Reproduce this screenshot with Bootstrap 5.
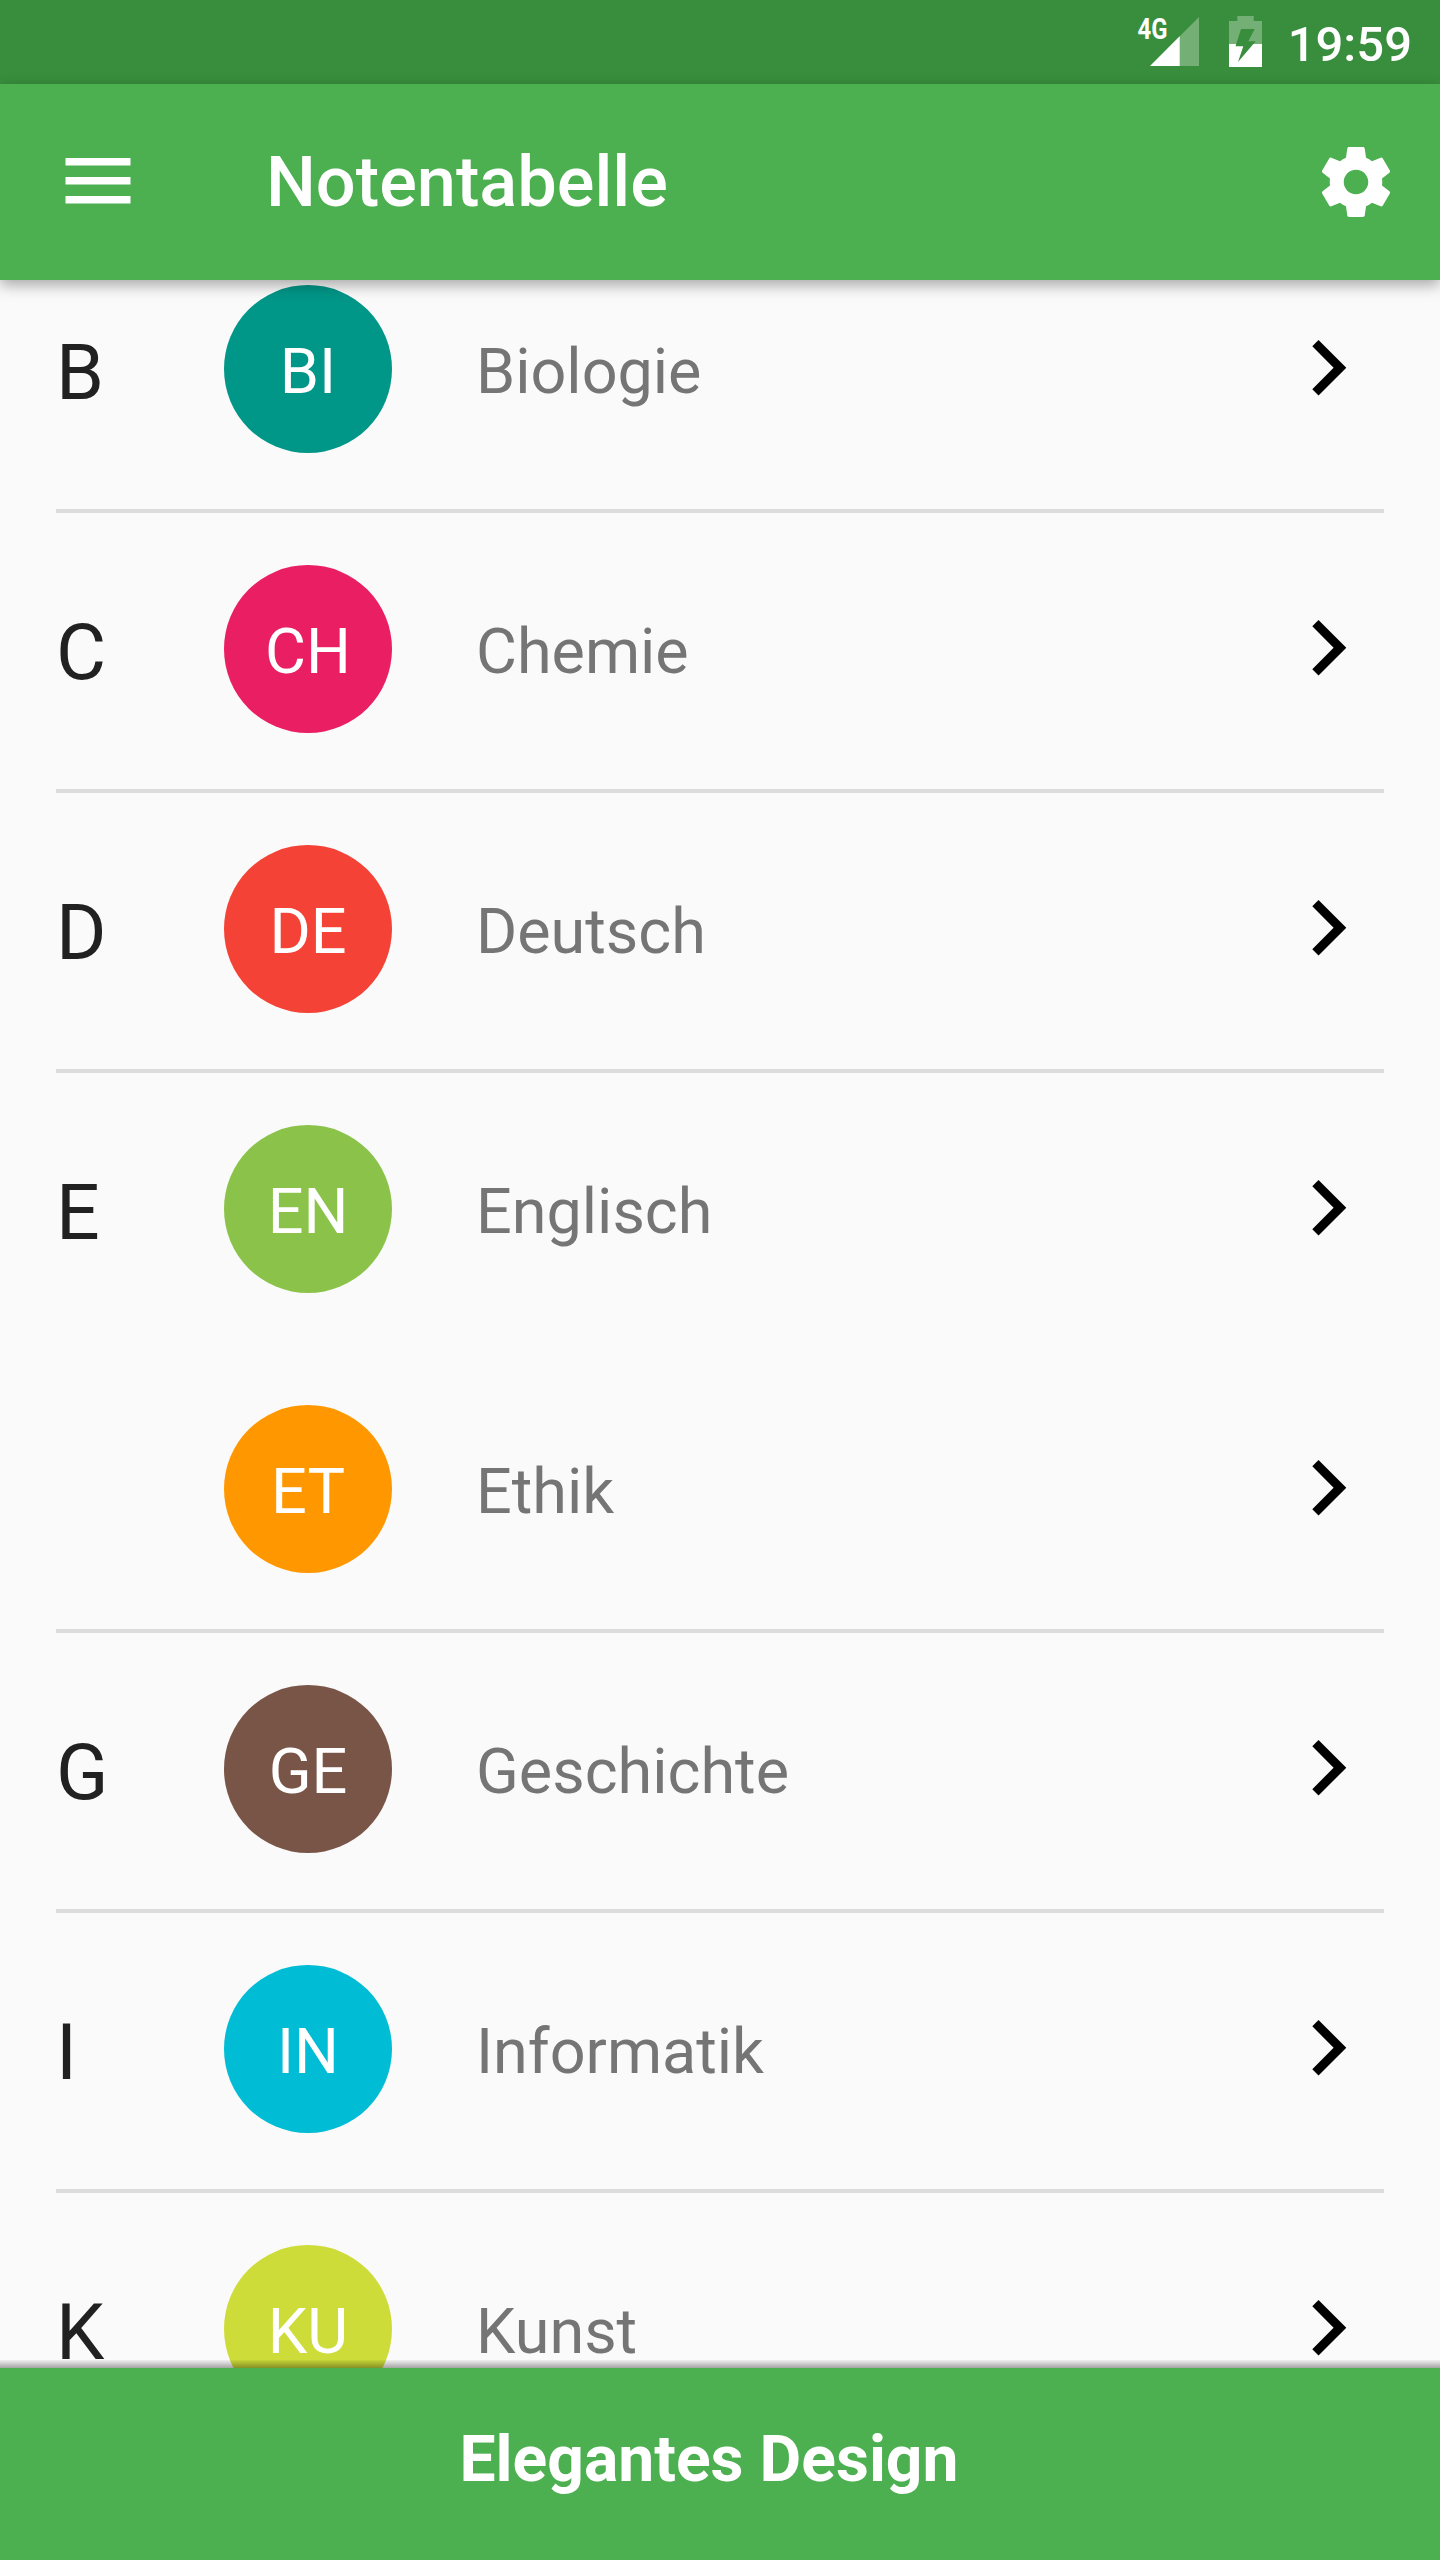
<!DOCTYPE html>
<html lang="de">
<head>
<meta charset="utf-8">
<meta name="viewport" content="width=device-width, initial-scale=1">
<title>Notentabelle</title>
<link href="https://cdn.jsdelivr.net/npm/bootstrap@5.3.0/dist/css/bootstrap.min.css" rel="stylesheet">
<style>
  body { font-family: Roboto, "Liberation Sans", sans-serif; background: #fafafa; line-height: 1; }
  svg { display: block; flex: none; }
  .screen { height: 2560px; width: 1440px; }
  .statusbar { height: 84px; background: #388e3c; padding-right: 28px; }
  .clock { font-size: 49px; font-weight: 500; padding-top: 5px; margin-left: 24px; }
  .appbar { height: 196px; background: #4caf50; padding: 0 42px 0 56px; box-shadow: 0 5px 14px rgba(0,0,0,.34); z-index: 2; }
  .app-title { font-size: 70.3px; font-weight: 500; margin-left: 126px; }
  .subjects { min-height: 0; }
  .subject-list { margin-top: -51px; }
  .subject { height: 280px; padding: 0 93px 0 56px; }
  .rule { height: 4px; margin: 0 56px -4px; background: #dcdcdc; }
  .initial { width: 168px; font-size: 77px; line-height: 65px; color: #212121; padding-top: 9px; }
  .disc { width: 168px; height: 168px; font-size: 63px; padding-top: 5px; }
  .subject-name { font-size: 62.9px; line-height: 63px; color: #757575; margin-left: 84px; padding-top: 5px; }
  .teal { background: #009688; } .pink { background: #e91e63; } .red { background: #f44336; }
  .lightgreen { background: #8bc34a; } .amber { background: #ff9800; } .brown { background: #795548; }
  .aqua { background: #00bcd4; } .lime { background: #cddc39; }
  .bottombar { height: 192px; background: #4caf50; font-size: 64.2px; padding: 0 22px 9px 0; z-index: 2; }
  .bottombar::before { content: ""; position: absolute; left: 0; right: 0; top: -8px; height: 8px; background: linear-gradient(rgba(0,0,0,.04), rgba(0,0,0,.34)); }
</style>
</head>
<body>
<div class="screen d-flex flex-column overflow-hidden">
  <header class="statusbar d-flex align-items-center justify-content-end text-white flex-shrink-0">
    <svg width="130" height="84" viewBox="1134 0 130 84" fill="#fff">
      <path d="M1150 66 1199 17V66z" opacity=".3"/>
      <path d="M1150 66 1179.7 36.3V66z"/>
      <text x="1137.5" y="39" font-size="29.5" font-weight="700" textLength="30" lengthAdjust="spacingAndGlyphs">4G</text>
      <path d="M1237.3 16H1253.7V21H1262V44H1229V21H1237.3z" opacity=".3"/>
      <path d="M1229 44H1262V67H1229z"/>
      <path d="M1241 29H1254.7L1248.3 41.3H1255.7L1238 62 1243.3 46.3H1235.5z" fill="#388e3c"/>
    </svg>
    <span class="clock">19:59</span>
  </header>
  <nav class="appbar d-flex align-items-center text-white flex-shrink-0 position-relative">
    <svg width="84" height="84" viewBox="56 140 84 84" fill="#fff"><path d="M65.5 158h65v7.5h-65zM65.5 177h65v7.5h-65zM65.5 196h65v7.5h-65z"/></svg>
    <h1 class="app-title mb-0 lh-1">Notentabelle</h1>
    <svg class="ms-auto" width="84" height="84" viewBox="0 0 24 24" fill="#fff"><path d="M19.43 12.98c.04-.32.07-.64.07-.98s-.03-.66-.07-.98l2.11-1.65c.19-.15.24-.42.12-.64l-2-3.46c-.12-.22-.39-.3-.61-.22l-2.49 1c-.52-.4-1.08-.73-1.69-.98l-.38-2.65C14.46 2.18 14.25 2 14 2h-4c-.25 0-.46.18-.49.42l-.38 2.65c-.61.25-1.17.59-1.69.98l-2.49-1c-.23-.09-.49 0-.61.22l-2 3.46c-.13.22-.07.49.12.64l2.11 1.65c-.04.32-.07.65-.07.98s.03.66.07.98l-2.11 1.65c-.19.15-.24.42-.12.64l2 3.46c.12.22.39.3.61.22l2.49-1c.52.4 1.08.73 1.69.98l.38 2.65c.03.24.24.42.49.42h4c.25 0 .46-.18.49-.42l.38-2.65c.61-.25 1.17-.59 1.69-.98l2.49 1c.23.09.49 0 .61-.22l2-3.46c.12-.22.07-.49-.12-.64l-2.11-1.65zM12 15.5c-1.93 0-3.5-1.57-3.5-3.5s1.57-3.5 3.5-3.5 3.5 1.57 3.5 3.5-1.57 3.5-3.5 3.5z"/></svg>
  </nav>
  <svg width="0" height="0" class="d-none"><symbol id="chevron" viewBox="0 0 35 60"><path d="M6.5 1 34.3 28.7 6.5 56.5 .3 50.2 21.6 28.7 .3 7.3z"/></symbol></svg>
  <main class="subjects flex-grow-1 overflow-hidden">
    <div class="subject-list">
      <div class="subject d-flex align-items-center"><span class="initial">B</span><span class="disc teal rounded-circle text-white d-flex align-items-center justify-content-center">BI</span><span class="subject-name">Biologie</span><svg class="ms-auto" width="35" height="60"><use href="#chevron"/></svg></div>
      <div class="rule"></div>
      <div class="subject d-flex align-items-center"><span class="initial">C</span><span class="disc pink rounded-circle text-white d-flex align-items-center justify-content-center">CH</span><span class="subject-name">Chemie</span><svg class="ms-auto" width="35" height="60"><use href="#chevron"/></svg></div>
      <div class="rule"></div>
      <div class="subject d-flex align-items-center"><span class="initial">D</span><span class="disc red rounded-circle text-white d-flex align-items-center justify-content-center">DE</span><span class="subject-name">Deutsch</span><svg class="ms-auto" width="35" height="60"><use href="#chevron"/></svg></div>
      <div class="rule"></div>
      <div class="subject d-flex align-items-center"><span class="initial">E</span><span class="disc lightgreen rounded-circle text-white d-flex align-items-center justify-content-center">EN</span><span class="subject-name">Englisch</span><svg class="ms-auto" width="35" height="60"><use href="#chevron"/></svg></div>
      <div class="subject d-flex align-items-center"><span class="initial"></span><span class="disc amber rounded-circle text-white d-flex align-items-center justify-content-center">ET</span><span class="subject-name">Ethik</span><svg class="ms-auto" width="35" height="60"><use href="#chevron"/></svg></div>
      <div class="rule"></div>
      <div class="subject d-flex align-items-center"><span class="initial">G</span><span class="disc brown rounded-circle text-white d-flex align-items-center justify-content-center">GE</span><span class="subject-name">Geschichte</span><svg class="ms-auto" width="35" height="60"><use href="#chevron"/></svg></div>
      <div class="rule"></div>
      <div class="subject d-flex align-items-center"><span class="initial">I</span><span class="disc aqua rounded-circle text-white d-flex align-items-center justify-content-center">IN</span><span class="subject-name">Informatik</span><svg class="ms-auto" width="35" height="60"><use href="#chevron"/></svg></div>
      <div class="rule"></div>
      <div class="subject d-flex align-items-center"><span class="initial">K</span><span class="disc lime rounded-circle text-white d-flex align-items-center justify-content-center">KU</span><span class="subject-name">Kunst</span><svg class="ms-auto" width="35" height="60"><use href="#chevron"/></svg></div>
    </div>
  </main>
  <footer class="bottombar d-flex align-items-center justify-content-center text-white fw-bold flex-shrink-0 position-relative">Elegantes Design</footer>
</div>
<script src="https://cdn.jsdelivr.net/npm/bootstrap@5.3.0/dist/js/bootstrap.bundle.min.js"></script>
</body>
</html>
